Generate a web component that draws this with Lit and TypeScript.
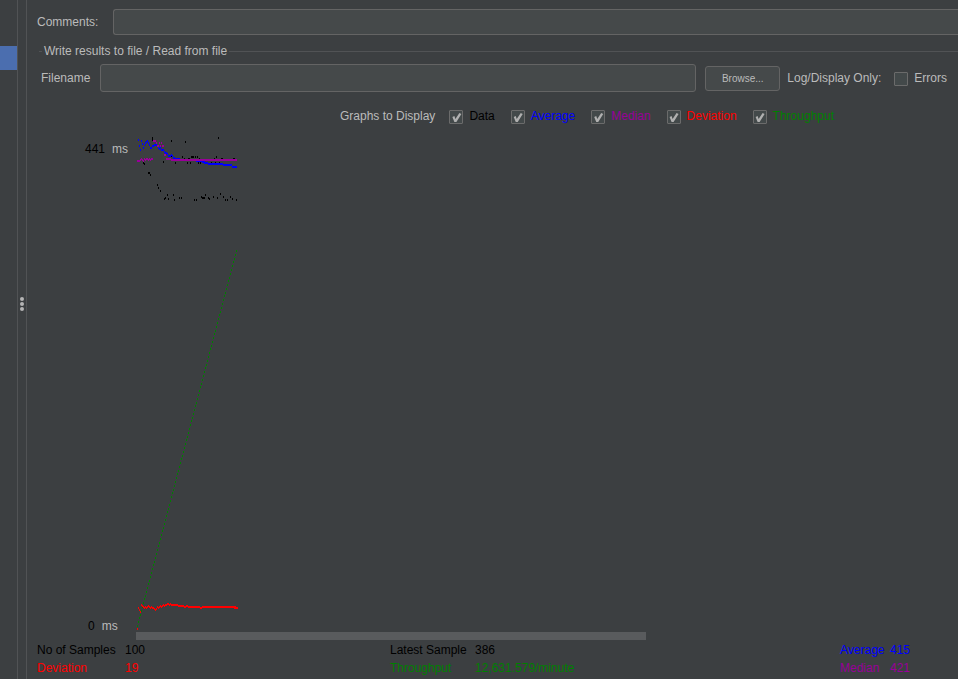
import { LitElement, html, css, svg } from "lit";
import { customElement } from "lit/decorators.js";

type Point = [number, number];

const samples: Point[] = [
  [16, 3], [16, 5], [35, 6], [49, 7], [27, 27], [7, 28], [8, 29], [12, 38], [13, 38], [14, 40],
  [21, 50], [22, 53], [24, 56], [28, 64], [29, 63], [31, 60], [32, 64], [37, 60], [38, 65],
  [43, 63], [45, 63], [35, 21], [46, 22], [39, 28], [48, 24], [52, 24], [53, 24],
  [82, 3], [55, 22], [56, 22], [57, 22], [59, 22], [61, 22], [63, 24], [80, 22], [78, 24],
  [85, 24], [86, 24], [97, 24], [98, 24], [51, 28], [54, 28], [62, 28], [64, 28], [70, 28],
  [75, 28], [79, 28], [83, 28], [58, 65], [60, 65], [65, 62], [66, 63], [67, 63], [68, 63],
  [69, 60], [72, 63], [73, 64], [77, 62], [81, 63], [84, 59], [87, 62], [89, 65], [91, 65],
  [94, 62], [96, 64], [100, 65],
];

const average: Point[] = [
  [2, 5], [3, 11], [4, 15], [5, 6], [6, 9], [7, 13], [8, 10], [9, 8], [10, 7], [11, 6], [12, 8],
  [13, 10], [14, 13], [15, 13], [16, 11], [17, 11], [18, 10], [19, 10], [20, 10], [21, 11], [22, 13],
  [23, 14], [24, 13], [25, 15], [26, 15], [27, 15], [28, 17], [29, 18], [30, 18], [31, 19], [32, 21],
  [33, 21], [34, 21], [35, 20], [36, 21], [37, 23], [38, 23],
];

const median: Point[] = [
  [1, 26], [2, 26], [3, 26], [4, 25], [5, 24], [6, 25], [7, 26], [8, 24], [9, 25], [10, 24], [11, 24],
  [12, 25], [13, 24], [14, 25], [15, 24], [16, 24], [17, 6], [18, 6], [19, 6], [20, 8], [21, 11],
  [22, 11], [23, 8], [24, 11], [25, 8], [26, 11], [27, 11], [28, 20], [29, 20], [30, 24], [31, 24], [32, 24],
];

const throughput: Point[] = Array.from({ length: 100 }, (_, i): Point => [
  i + 1,
  Math.round(491 - (i * 375) / 99),
]);

const deviation: Point[] = [
  [1, 494], [2, 473], [3, 475], [4, 477], [5, 470], [6, 471], [7, 472], [8, 473], [9, 472], [10, 473],
  [11, 472], [12, 471], [13, 472], [14, 473], [15, 472], [16, 473], [17, 473], [18, 474], [19, 475],
  [20, 474], [21, 472], [22, 473], [23, 472], [24, 471], [25, 472], [26, 471], [27, 470], [28, 471],
  [29, 470], [30, 470], [31, 469], [32, 469], [33, 470], [34, 469], [35, 470],
];

const dots = (points: Point[]) => points.map(([x, y]) => `M${x} ${y}h1v2h-1z`).join("");

const graphs = [
  ["Data", "data"],
  ["Average", "average"],
  ["Median", "median"],
  ["Deviation", "deviation"],
  ["Throughput", "throughput"],
];

@customElement("app-root")
export class AppRoot extends LitElement {
  static styles = css`
    :host {
      display: flex;
      min-height: 100vh;
      background: #3c3f41;
      color: #bbb;
      font: 12px/18px "Liberation Sans", Arial, sans-serif;
    }
    * { box-sizing: border-box; }
    .tree { flex: 0 0 17px; padding-top: 46px; }
    .selected { height: 24px; background: #4b6eaf; }
    .divider {
      flex: 0 0 10px;
      display: flex;
      flex-direction: column;
      align-items: center;
      justify-content: center;
      gap: 1px;
      padding-bottom: 72px;
      border: solid #515355;
      border-width: 0 1px;
    }
    .grip { width: 4px; height: 4px; border-radius: 2px; background: #b4b4b4; }
    .panel { flex: 1; min-width: 0; padding-top: 9px; }
    .comments { display: flex; align-items: center; margin-bottom: 7px; padding-left: 10px; }
    .comments label { width: 76px; }
    .field {
      min-width: 0;
      flex: 1;
      border: 1px solid #646464;
      border-radius: 3px;
      background: #45494a;
      color: #bbb;
      font: inherit;
      outline: none;
    }
    .comments .field { height: 26px; border-right: 0; border-radius: 3px 0 0 3px; }
    .output { border: 0; margin: 0; padding: 0; min-width: 0; }
    .legend {
      display: flex;
      align-items: center;
      width: 100%;
      height: 18px;
      padding: 0 0 0 12px;
      gap: 2px;
    }
    .legend::before { content: ""; width: 3px; height: 1px; background: #515355; }
    .legend::after { content: ""; flex: 1; height: 1px; background: #515355; }
    .file { display: flex; align-items: center; height: 36px; padding: 0 11px 0 14px; }
    .file label:first-child { width: 59px; }
    .file .field { height: 28px; }
    .browse {
      width: 75px;
      height: 25px;
      margin: 0 7px 0 9px;
      padding: 0;
      border: 1px solid #646464;
      border-radius: 3px;
      background: #45494a;
      color: #bbb;
      font: 10px "Liberation Sans", Arial, sans-serif;
    }
    .check { display: flex; align-items: center; }
    .check input {
      appearance: none;
      display: grid;
      width: 14px;
      height: 14px;
      margin: 2px 6px 0 0;
      border: 1px solid #6b6b6b;
      border-radius: 1px;
      background: #43494a;
    }
    .check input:checked::before {
      content: "";
      width: 12px;
      height: 12px;
      background: #b0b0b0;
      clip-path: polygon(2px 6px, 4px 5px, 5px 8px, 9px 2px, 11px 3px, 6px 11px, 4px 11px);
    }
    .errors { margin-left: 13px; }
    .graphs { display: flex; gap: 16px; height: 18px; margin-top: 11px; padding-left: 313px; white-space: nowrap; }
    .graphs > span { margin-right: -2px; }
    .data { color: #000; }
    .average { color: #00f; }
    .median { color: #909; }
    .deviation { color: #f00; }
    .throughput { color: #008000; }
    .chart { display: grid; grid-template-columns: 109px 1fr; margin-top: 9px; }
    .scale { display: flex; flex-direction: column; justify-content: space-between; padding-top: 9px; line-height: 12px; }
    .mark { display: flex; gap: 7px; padding-left: 58px; }
    .zero { padding-left: 61px; }
    .plot { display: block; width: 508px; height: 498px; max-width: 100%; }
    .scroll { grid-column: 2; width: 62%; height: 8px; background: #595b5d; }
    .stats { width: 100%; table-layout: fixed; border-collapse: collapse; margin-top: 1px; }
    .stats th, .stats td { padding: 0; text-align: left; font-weight: 400; white-space: nowrap; }
    .stats th:first-child { padding-left: 10px; }
    .c1 { width: 98px; }
    .c2 { width: 265px; }
    .c3 { width: 85px; }
    .c5 { width: 50px; }
    .c6 { width: 68px; }
  `;

  render() {
    return html`
      <div class="tree"><div class="selected"></div></div>
      <div class="divider"><i class="grip"></i><i class="grip"></i><i class="grip"></i></div>
      <main class="panel">
        <div class="comments">
          <label for="comments">Comments:</label><input id="comments" class="field" />
        </div>
        <fieldset class="output">
          <legend class="legend">Write results to file / Read from file</legend>
          <div class="file">
            <label for="filename">Filename</label><input id="filename" class="field" />
            <button class="browse" type="button">Browse...</button>
            <span>Log/Display Only:</span>
            <label class="check errors"><input type="checkbox" />Errors</label>
          </div>
        </fieldset>
        <div class="graphs">
          <span>Graphs to Display</span>
          ${graphs.map(([name, tone]) => html`
            <label class="check ${tone}"><input type="checkbox" checked />${name}</label>`)}
        </div>
        <div class="chart">
          <div class="scale">
            <div class="mark"><span class="data">441</span><span>ms</span></div>
            <div class="mark zero"><span class="data">0</span><span>ms</span></div>
          </div>
          <svg class="plot" viewBox="0 0 508 498" preserveAspectRatio="xMinYMin slice" shape-rendering="crispEdges" role="img" aria-label="Response time graph">
            ${svg`
              <path fill="#000" d=${dots(samples)} />
              <path fill="#008000" d=${dots(throughput)} />
              <path fill="#00f" d=${dots(average) + "M39 24h5v2h-5zM60 26h6v2h-6zM66 27h3v2h-3zM68 28h4v2h-4zM72 29h15v2h-15zM87 30h9v2h-9zM96 32h5v2h-5z"} />
              <path fill="#909" d=${dots(median) + "M33 24h2v2h-2zM35 25h66v2h-66z"} />
              <path fill="#f00" d=${dots(deviation) + "M36 470h6v2h-6zM42 471h6v2h-6zM48 472h2v2h-2zM50 471h2v2h-2zM52 472h12v2h-12zM64 473h2v2h-2zM66 472h34v2h-34zM98 473h4v2h-4z"} />
            `}
          </svg>
          <div class="scroll"></div>
        </div>
        <table class="stats">
          <colgroup><col class="c1" /><col class="c2" /><col class="c3" /><col /><col class="c5" /><col class="c6" /></colgroup>
          <tr>
            <th class="data">No of Samples</th><td class="data">100</td>
            <th class="data">Latest Sample</th><td class="data">386</td>
            <th class="average">Average</th><td class="average">415</td>
          </tr>
          <tr>
            <th class="deviation">Deviation</th><td class="deviation">19</td>
            <th class="throughput">Throughput</th><td class="throughput">12,631.579/minute</td>
            <th class="median">Median</th><td class="median">421</td>
          </tr>
        </table>
      </main>
    `;
  }
}
